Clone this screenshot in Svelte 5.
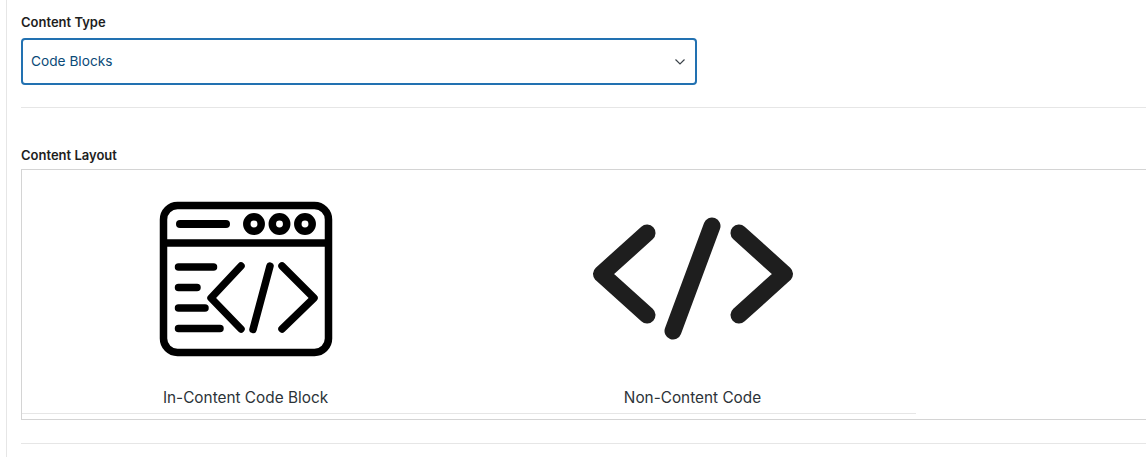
<script>
  const layouts = [
    { id: "in-content", label: "In-Content Code Block" },
    { id: "non-content", label: "Non-Content Code" }
  ];
</script>

<div class="page">
  <div class="field">
    <label class="field-label" for="content-type">Content Type</label>
    <div class="select">
      <span id="content-type">Code Blocks</span>
      <svg width="12" height="8" viewBox="0 0 12 8" fill="none" stroke="#3c434a" stroke-width="1.2">
        <path d="M1.500 1.500 L6 6 L10.500 1.500" />
      </svg>
    </div>
  </div>

  <hr class="rule first" />

  <div class="field-label second">Content Layout</div>
  <div class="layout-box">
    <div class="options">
      {#each layouts as item}
        <div class="option">
          <div class="icon">
            {#if item.id === "in-content"}
              <svg width="195" height="175" viewBox="0 0 195 175" fill="none" stroke="#000" stroke-linecap="round" stroke-linejoin="round">
                <rect x="13.5" y="15.5" width="165" height="147" rx="14" stroke-width="7.5" />
                <path d="M14 53 H178" stroke-width="7.5" />
                <path d="M30 34 H76" stroke-width="8" />
                <circle cx="104" cy="34" r="7.2" stroke-width="7.5" />
                <circle cx="129.500" cy="34" r="7.2" stroke-width="7.5" />
                <circle cx="155" cy="34" r="7.2" stroke-width="7.5" />
                <path d="M28.500 77 H63.500 M28.500 97.500 H47 M28.500 118 H55 M28.500 138.500 H70" stroke-width="7.500" />
                <path d="M91 76 L61 108 L91 139 M120 76 L103 139.500 M132 76 L164 108 L132 139" stroke-width="7.500" />
              </svg>
            {:else}
              <svg width="225" height="145" viewBox="0 0 225 145" fill="none" stroke="#1e1e1e" stroke-linecap="round" stroke-linejoin="round" stroke-width="17">
                <path d="M67 28 L21.500 69 L67 110" />
                <path d="M132 21 L93 126" />
                <path d="M159 28 L204.500 69 L159 110" />
              </svg>
            {/if}
          </div>
          <div class="caption">{item.label}</div>
        </div>
      {/each}
    </div>
  </div>

  <hr class="rule last" />
</div>

<style>
  :global(body) {
    margin: 0;
    background: #fff;
    overflow: hidden;
  }

  .page {
    height: 457px;
    box-sizing: border-box;
    margin-left: 6px;
    border-left: 1px solid #e6e6e6;
    padding: 15px 0 0 14px;
    font-family: Inter, "Liberation Sans", sans-serif;
    overflow: hidden;
  }

  .field-label {
    display: block;
    font-size: 13px;
    line-height: 15px;
    font-weight: 600;
    color: #1e1e1e;
  }

  .select {
    margin-top: 8px;
    width: 676px;
    height: 47px;
    box-sizing: border-box;
    border: 2px solid #2271b1;
    border-radius: 4px;
    padding: 0 9px 2px 8px;
    display: flex;
    align-items: center;
    justify-content: space-between;
    font-size: 13.700px;
    color: #0a4b78;
  }

  .select svg {
    margin-top: 3px;
  }

  .rule {
    border: 0;
    height: 1px;
    margin: 0;
    background: #e6e6e6;
  }

  .rule.first {
    margin-top: 22px;
  }

  .second {
    margin-top: 40px;
  }

  .layout-box {
    margin-top: 6px;
    height: 251px;
    box-sizing: border-box;
    border: 1px solid #d4d4d4;
    border-right: 0;
  }

  .options {
    display: grid;
    grid-template-columns: 447px 447px;
    width: 894px;
    height: 244px;
    box-sizing: border-box;
    border-bottom: 1px solid #e6e6e6;
  }

  .option {
    display: flex;
    flex-direction: column;
    align-items: center;
  }

  .icon {
    height: 210px;
    display: flex;
    justify-content: center;
  }

  .option:first-child .icon svg {
    margin-top: 20px;
    margin-left: 4px;
  }

  .option:last-child .icon svg {
    margin-top: 35px;
    margin-left: 0;
  }

  .caption {
    margin-top: 8px;
    font-size: 15.350px;
    line-height: 20px;
    color: #2c3338;
  }

  .rule.last {
    margin-top: 23px;
  }
</style>
